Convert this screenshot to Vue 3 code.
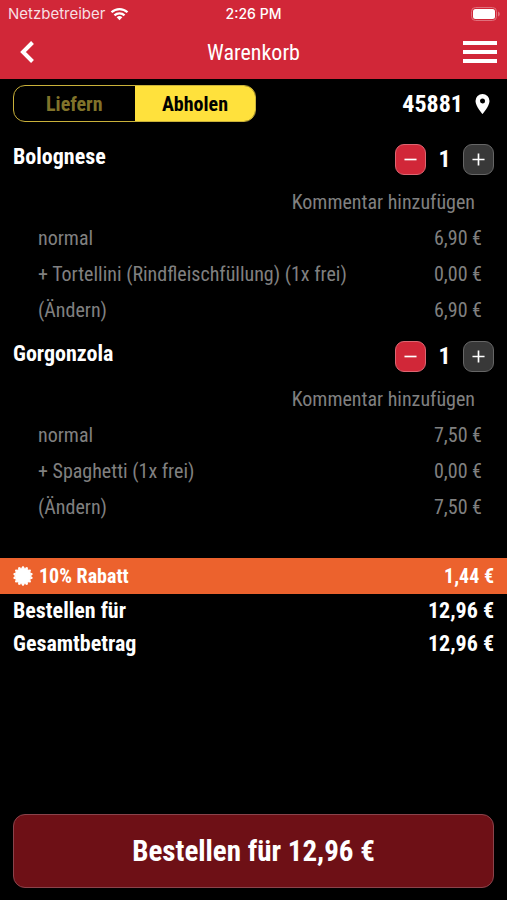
<script setup>
import { computed, reactive, ref } from 'vue'

const mode = ref('pickup')

const items = reactive([
    {
        name: 'Bolognese',
        quantity: 1,
        price: 6.9,
        options: [
            {label: 'normal', price: 6.9},
            {label: '+ Tortellini (Rindfleischfüllung) (1x frei)', price: 0},
        ]
    },
    {
        name: 'Gorgonzola',
        quantity: 1,
        price: 7.5,
        options: [
            {label: 'normal', price: 7.5},
            {label: '+ Spaghetti (1x frei)', price: 0},
        ]
    },
])

const sum = computed(() => items.reduce((acc, item) => acc + item.price * item.quantity, 0))
const discount = computed(() => Math.round(sum.value * 10) / 100)
const total = computed(() => sum.value - discount.value)

function euro(value)
{
    return value.toFixed(2).replace('.', ',') + ' €'
}
</script>

<template>
    <div class="app">
        <header>
            <div class="status">
                <span class="carrier">
                    Netzbetreiber
                    <svg width="19" height="14" viewBox="0 0 20 14" fill="none" stroke="#fff" stroke-width="2.4">
                        <path d="M1.6 5.2a12 12 0 0 1 16.8 0M4.7 8.4a7.6 7.6 0 0 1 10.6 0"/>
                        <path d="M10 13.6 7 10.5a4.3 4.3 0 0 1 6 0z" fill="#fff" stroke="none"/>
                    </svg>
                </span>
                <span class="clock">2:26 PM</span>
                <svg class="battery" width="30" height="14" viewBox="0 0 30 14">
                    <rect x=".5" y=".5" width="25" height="13" rx="4" fill="none" stroke="#e0707c"/>
                    <rect x="2" y="2" width="22" height="10" rx="2.5" fill="#fff"/>
                    <path d="M27 4.5c2.4.8 2.4 4.2 0 5z" fill="#e0707c"/>
                </svg>
            </div>
            <nav>
                <button class="icon" aria-label="Zurück">
                    <svg width="16" height="24" viewBox="0 0 16 24" fill="none" stroke="#fff" stroke-width="4">
                        <path d="M13.500 2.500 4 12l9.500 9.500"/>
                    </svg>
                </button>
                <h1>Warenkorb</h1>
                <button class="icon menu" aria-label="Menü">
                    <svg width="34" height="24" viewBox="0 0 34 24" fill="#fff">
                        <path d="M0 1h34v4H0zM0 10h34v4H0zM0 19h34v4H0z"/>
                    </svg>
                </button>
            </nav>
        </header>

        <main>
            <div class="mode">
                <div class="toggle">
                    <button :class="{active: mode === 'delivery'}" @click="mode = 'delivery'">Liefern</button>
                    <button :class="{active: mode === 'pickup'}" @click="mode = 'pickup'">Abholen</button>
                </div>
                <button class="zip">
                    45881
                    <svg width="15" height="20" viewBox="0 0 14 20" fill="#fff" fill-rule="evenodd">
                        <path d="M7 0a7 7 0 0 0-7 7c0 5.200 7 13 7 13s7-7.800 7-13a7 7 0 0 0-7-7zm0 4.500a2.500 2.500 0 1 1 0 5 2.500 2.500 0 0 1 0-5z"/>
                    </svg>
                </button>
            </div>

            <section v-for="item in items" :key="item.name" class="item">
                <div class="head">
                    <h2 v-text="item.name"/>
                    <div class="stepper">
                        <button class="minus" aria-label="Weniger" @click="item.quantity = Math.max(1, item.quantity - 1)">
                            <svg width="13" height="13" viewBox="0 0 14 14" stroke="#fff" stroke-width="1.800"><path d="M.5 7h13"/></svg>
                        </button>
                        <span v-text="item.quantity"/>
                        <button aria-label="Mehr" @click="item.quantity++">
                            <svg width="13" height="13" viewBox="0 0 14 14" stroke="#fff" stroke-width="1.800"><path d="M.5 7h13M7 .5v13"/></svg>
                        </button>
                    </div>
                </div>
                <button class="comment">Kommentar hinzufügen</button>
                <ul>
                    <li v-for="option in item.options" :key="option.label">
                        <span v-text="option.label"/>
                        <span v-text="euro(option.price)"/>
                    </li>
                    <li>
                        <button>(Ändern)</button>
                        <span v-text="euro(item.price * item.quantity)"/>
                    </li>
                </ul>
            </section>

            <div class="discount">
                <svg width="20" height="20" viewBox="-10 -10 20 20" fill="#fff">
                    <circle r="8"/>
                    <path v-for="n in 14" :key="n" d="M-2-7.500-.6-9.800H.6L2-7.500z" :transform="`rotate(${n * 360 / 14})`"/>
                </svg>
                <span>10% Rabatt</span>
                <span class="amount" v-text="euro(discount)"/>
            </div>
            <dl>
                <div>
                    <dt>Bestellen für</dt>
                    <dd v-text="euro(total)"/>
                </div>
                <div>
                    <dt>Gesamtbetrag</dt>
                    <dd v-text="euro(total)"/>
                </div>
            </dl>
        </main>

        <footer>
            <button class="order">Bestellen für {{ euro(total) }}</button>
        </footer>
    </div>
</template>

<style>
body
{
    margin: 0;
    background: #000;
}
</style>

<style scoped>
.app
{
    display: flex;
    flex-direction: column;
    min-height: 100vh;
    background: #000;
    color: #fff;
    font-family: "Roboto Condensed", "Liberation Sans Narrow", Roboto, sans-serif;
    font-size: 20px;
}

button
{
    padding: 0;
    border: 0;
    background: none;
    color: inherit;
    font: inherit;
    cursor: pointer;
}

svg
{
    display: block;
}

h1, h2, ul, dl, dd
{
    margin: 0;
    padding: 0;
}

header
{
    background: #d12738;
}

.status
{
    display: grid;
    grid-template-columns: 1fr auto 1fr;
    align-items: center;
    height: 27px;
    padding: 0 8px;
    font-family: Inter, sans-serif;
    font-size: 14px;
}

.carrier
{
    display: flex;
    align-items: center;
    gap: 5px;
    color: #f8dfe2;
    font-size: 15px;
}

.clock
{
    font-weight: 500;
}

.battery
{
    justify-self: end;
    margin-right: -2px;
}

nav
{
    display: grid;
    grid-template-columns: 1fr auto 1fr;
    align-items: center;
    height: 50px;
    padding: 0 10px 2px;
}

h1
{
    font-size: 22px;
    font-weight: 400;
}

.icon
{
    justify-self: start;
    padding-left: 9px;
}

.menu
{
    justify-self: end;
    padding: 0;
}

main
{
    flex: 1;
}

.mode
{
    display: flex;
    justify-content: space-between;
    align-items: center;
    padding: 6px 17px 12px 13px;
}

.toggle
{
    display: flex;
    box-sizing: border-box;
    width: 51%;
    height: 37px;
    overflow: hidden;
    border: 1px solid #c9b13a;
    border-radius: 12px;
}

.toggle button
{
    flex: 1;
    color: #80732a;
    font-weight: 700;
}

.toggle .active
{
    background: #ffe13c;
    color: #000;
}

.zip
{
    display: flex;
    align-items: center;
    gap: 12px;
    font-size: 24px;
    font-weight: 700;
}

.item
{
    padding-bottom: 3px;
}

.head
{
    display: flex;
    justify-content: space-between;
    align-items: center;
    height: 50px;
    padding: 0 13px;
}

h2
{
    padding-bottom: 6px;
    font-size: 22px;
    font-weight: 700;
}

.stepper
{
    display: flex;
    align-items: center;
}

.stepper button
{
    display: grid;
    place-items: center;
    box-sizing: border-box;
    width: 31px;
    height: 31px;
    border: 1px solid #666;
    border-radius: 9px;
    background: #383838;
}

.stepper .minus
{
    border-color: #dd6672;
    background: #d12738;
}

.stepper span
{
    width: 37px;
    font-size: 24px;
    font-weight: 700;
    text-align: center;
}

.comment
{
    display: block;
    height: 36px;
    margin: 0 32px 0 auto;
    color: #808080;
}

li
{
    display: flex;
    justify-content: space-between;
    padding: 0 25px 0 38px;
    color: #808080;
    line-height: 36px;
}

.discount
{
    display: flex;
    align-items: center;
    gap: 6px;
    height: 36px;
    margin-top: 30px;
    padding: 0 13px;
    background: #ec622d;
    font-weight: 700;
}

.amount
{
    margin-left: auto;
}

dl div
{
    display: flex;
    justify-content: space-between;
    padding: 0 13px;
    font-size: 22px;
    font-weight: 700;
    line-height: 33px;
}

footer
{
    padding: 12px 13px;
}

.order
{
    width: 100%;
    height: 74px;
    border: 1px solid #8a434b;
    border-radius: 12px;
    background: #6e1016;
    font-size: 29px;
    font-weight: 700;
}
</style>
